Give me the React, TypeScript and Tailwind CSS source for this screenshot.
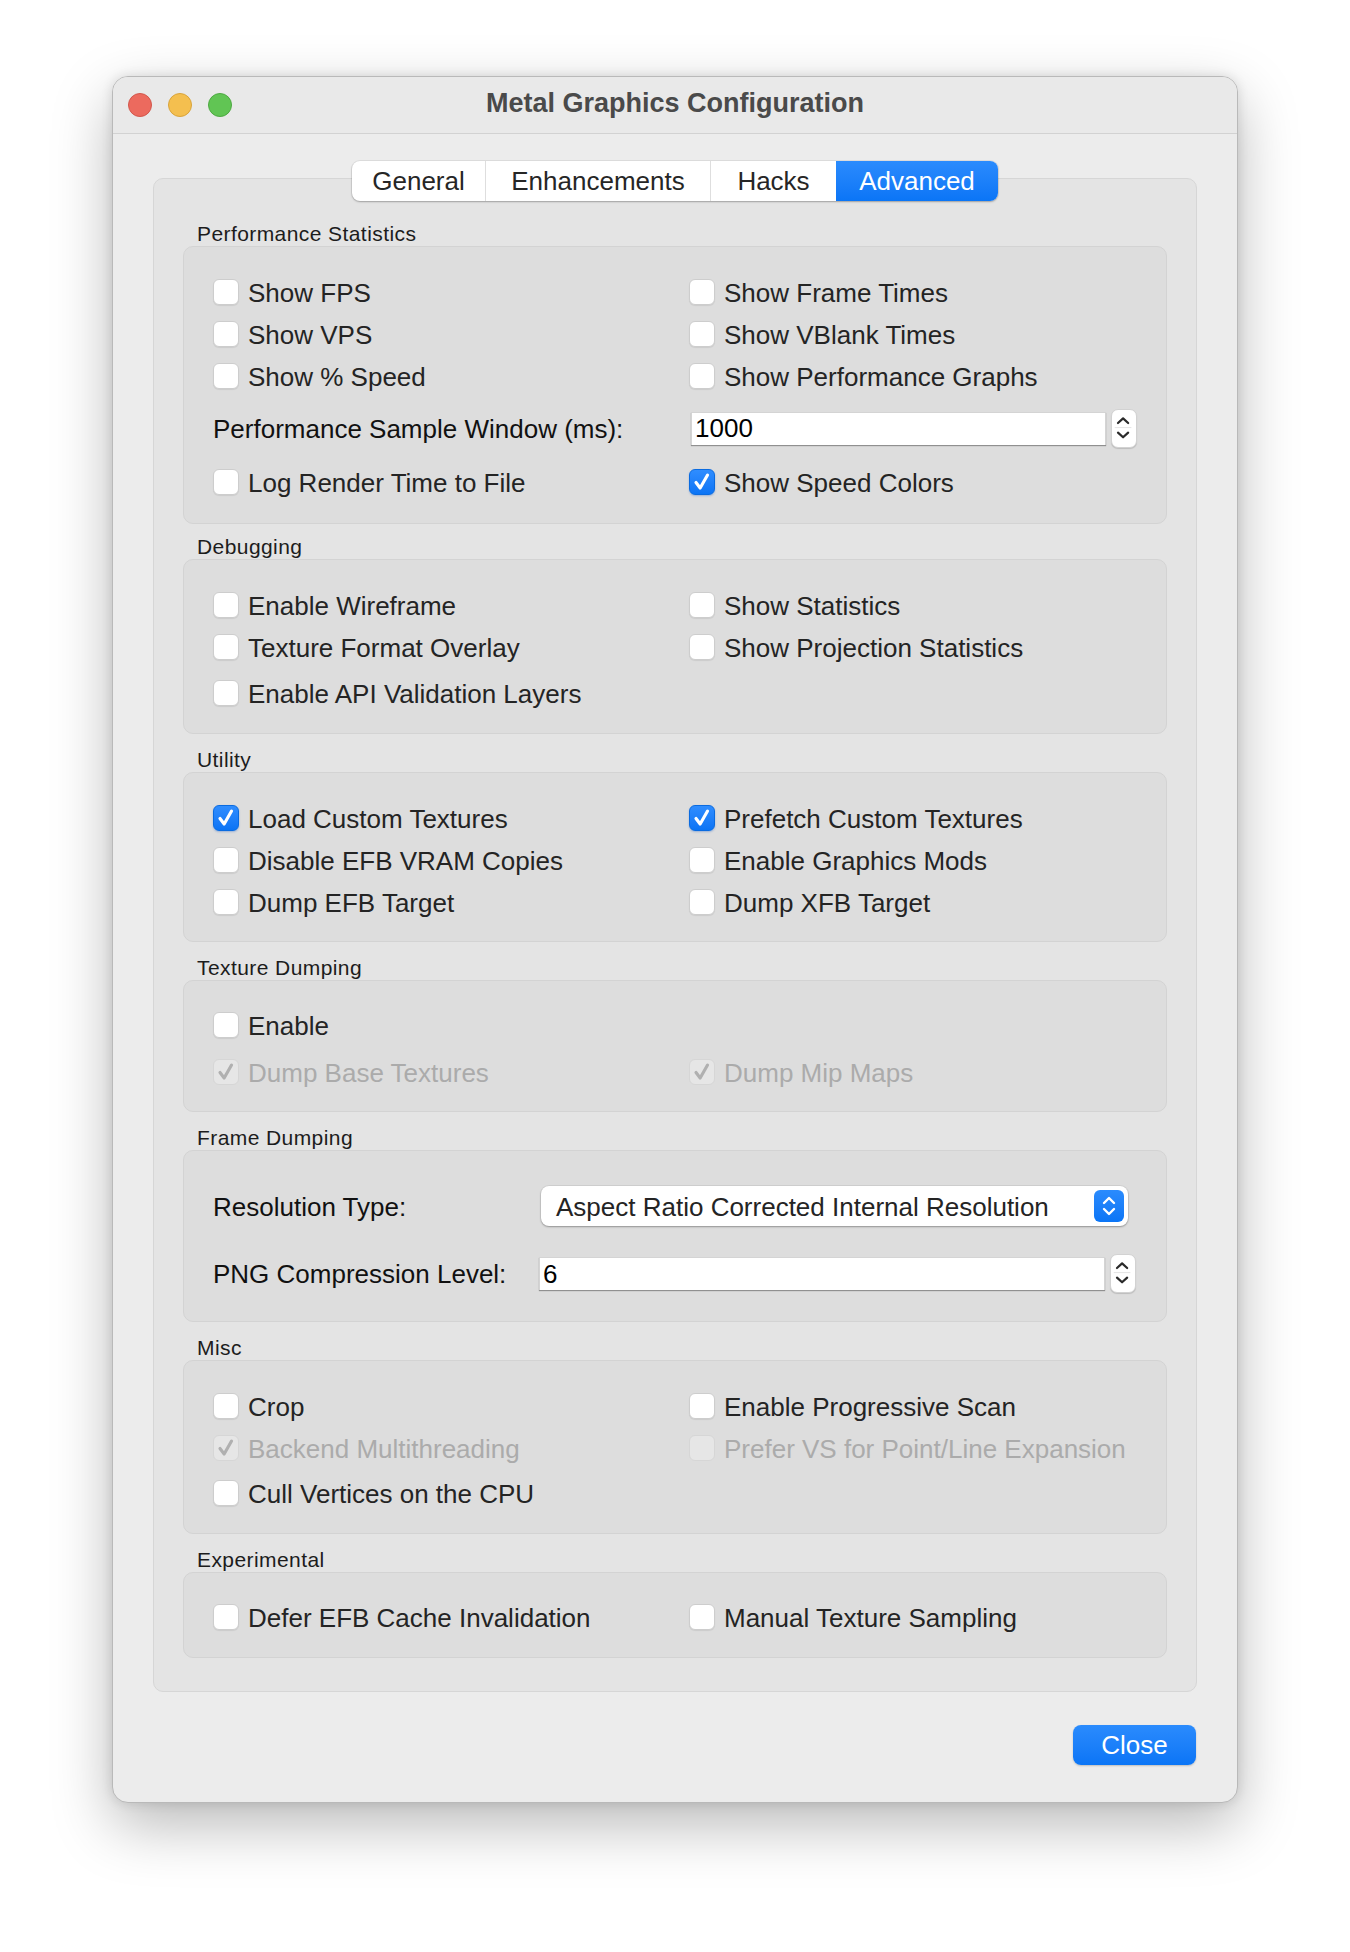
import React from 'react';

const FONT = { fontFamily: '"Liberation Sans", Arial, sans-serif' };

function CheckMark({ color }: { color: string }) {
  return (
    <svg viewBox="0 0 26 26" className="w-[26px] h-[26px]">
      <path d="M6.5 13.5 L11 19.5 L19 5.5" fill="none" stroke={color} strokeWidth="3.4" strokeLinecap="round" strokeLinejoin="round" />
    </svg>
  );
}

function Check({ label, checked = false, disabled = false }: { label: string; checked?: boolean; disabled?: boolean }) {
  let box = 'bg-white border border-[#cdcdcd] shadow-[0_1px_1px_rgba(0,0,0,0.08)]';
  if (checked && !disabled) box = 'bg-gradient-to-b from-[#2f8dff] to-[#0a74f5] border border-[#0a6be0] shadow-[0_1px_2px_rgba(0,80,200,0.3)]';
  if (disabled) box = 'bg-[#e6e6e6] border border-[#d6d6d6]';
  return (
    <div className="h-[42px] flex items-center">
      <div className={`w-[26px] h-[26px] rounded-[6px] flex items-center justify-center shrink-0 ${box}`}>
        {checked && <CheckMark color={disabled ? '#b0b0b0' : '#ffffff'} />}
      </div>
      <span className={`ml-[9px] pt-[2px] text-[26px] leading-none whitespace-nowrap ${disabled ? 'text-[#ababab]' : 'text-[#242424]'}`}>{label}</span>
    </div>
  );
}

function Stepper() {
  return (
    <div className="w-[26px] h-[39px] bg-white rounded-[7px] border border-[#d2d2d2] shadow-[0_1px_1px_rgba(0,0,0,0.15)] flex flex-col items-center justify-center shrink-0">
      <svg viewBox="0 0 26 39" className="w-[24px] h-[37px]">
        <path d="M6.5 13.5 L12 8.5 L17.5 13.5" fill="none" stroke="#2a2a2a" strokeWidth="2.4" strokeLinecap="round" strokeLinejoin="round" />
        <line x1="3" y1="18.5" x2="21" y2="18.5" stroke="#e2e2e2" strokeWidth="1" />
        <path d="M6.5 24 L12 29 L17.5 24" fill="none" stroke="#2a2a2a" strokeWidth="2.4" strokeLinecap="round" strokeLinejoin="round" />
      </svg>
    </div>
  );
}

function NumberField({ value, width }: { value: string; width: string }) {
  return (
    <div className="flex items-center gap-[5px]">
      <div className={`${width} h-[33px] bg-white border-t border-x border-[#d4d4d4] shadow-[0_1px_1px_rgba(0,0,0,0.35)] flex items-center pl-[3px] text-[26px] text-black`}>
        {value}
      </div>
      <Stepper />
    </div>
  );
}

function Section({ title, children, className = '', gap = 'mt-[12px]' }: { title: string; children: React.ReactNode; className?: string; gap?: string }) {
  return (
    <div className={gap}>
      <div className="h-[26px] pl-[14px] text-[21px] tracking-[0.02em] leading-[28px] text-[#1c1c1c]">{title}</div>
      <div className={`bg-[#dddddd] border border-[#d3d3d3] rounded-[10px] pl-[29px] pr-[29px] ${className}`}>{children}</div>
    </div>
  );
}

function Grid({ children }: { children: React.ReactNode }) {
  return <div className="grid grid-cols-[476px_1fr]">{children}</div>;
}

export default function App() {
  return (
    <div className="min-h-[1952px] bg-white pl-[112px] pt-[76px]" style={FONT}>
      <div className="w-[1126px] bg-[#ececec] rounded-[16px] border border-[#b9b9b9] shadow-[0_22px_60px_rgba(0,0,0,0.28),0_0_12px_rgba(0,0,0,0.12)] overflow-hidden">
        {/* title bar */}
        <div className="h-[57px] border-b border-[#d2d2d2] grid grid-cols-[1fr_auto_1fr] items-center bg-[#e9e9e9]">
          <div className="flex items-center gap-[16px] pl-[15px]">
            <div className="w-[24px] h-[24px] rounded-full bg-[#ec6a5e] border border-[#d2574c]" />
            <div className="w-[24px] h-[24px] rounded-full bg-[#f4bf4f] border border-[#d9a43b]" />
            <div className="w-[24px] h-[24px] rounded-full bg-[#61c554] border border-[#4ea942]" />
          </div>
          <div className="text-[27px] font-bold text-[#4a4a4a] pb-[4px]">Metal Graphics Configuration</div>
          <div />
        </div>

        <div className="px-[40px] pt-[27px]">
          {/* tabs */}
          <div className="flex justify-center relative z-10">
            <div className="flex h-[40px] rounded-[8px] bg-white shadow-[0_1px_2px_rgba(0,0,0,0.25),0_0_0_1px_rgba(0,0,0,0.06)] text-[26px] text-[#262626] overflow-hidden">
              <div className="w-[134px] flex items-center justify-center border-r border-[#dedede]">General</div>
              <div className="w-[225px] flex items-center justify-center border-r border-[#dedede]">Enhancements</div>
              <div className="w-[125px] flex items-center justify-center">Hacks</div>
              <div className="w-[162px] flex items-center justify-center text-white bg-gradient-to-b from-[#2a8bfd] to-[#0a75f6]">Advanced</div>
            </div>
          </div>

          {/* tab panel */}
          <div className="-mt-[23px] bg-[#e4e4e4] border border-[#d6d6d6] rounded-[10px] px-[29px] pt-[41px] pb-[33px]">
            <Section title="Performance Statistics" gap="" className="pt-[24px] pb-[20px]">
              <Grid>
                <Check label="Show FPS" />
                <Check label="Show Frame Times" />
                <Check label="Show VPS" />
                <Check label="Show VBlank Times" />
                <Check label="Show % Speed" />
                <Check label="Show Performance Graphs" />
                <div className="h-[62px] flex items-center pt-[2px] text-[26px] text-[#111]">Performance Sample Window (ms):</div>
                <div className="h-[62px] flex items-center pl-[2px]">
                  <NumberField value="1000" width="w-[415px]" />
                </div>
                <div className="mt-[2px]"><Check label="Log Render Time to File" /></div>
                <div className="mt-[2px]"><Check label="Show Speed Colors" checked /></div>
              </Grid>
            </Section>

            <Section title="Debugging" gap="mt-[9px]" className="pt-[24px] pb-[19px]">
              <Grid>
                <Check label="Enable Wireframe" />
                <Check label="Show Statistics" />
                <Check label="Texture Format Overlay" />
                <Check label="Show Projection Statistics" />
                <div className="mt-[4px]"><Check label="Enable API Validation Layers" /></div>
              </Grid>
            </Section>

            <Section title="Utility" className="pt-[24px] pb-[18px]">
              <Grid>
                <Check label="Load Custom Textures" checked />
                <Check label="Prefetch Custom Textures" checked />
                <Check label="Disable EFB VRAM Copies" />
                <Check label="Enable Graphics Mods" />
                <Check label="Dump EFB Target" />
                <Check label="Dump XFB Target" />
              </Grid>
            </Section>

            <Section title="Texture Dumping" className="pt-[23px] pb-[18px]">
              <Grid>
                <Check label="Enable" />
                <div />
                <div className="mt-[5px]"><Check label="Dump Base Textures" checked disabled /></div>
                <div className="mt-[5px]"><Check label="Dump Mip Maps" checked disabled /></div>
              </Grid>
            </Section>

            <Section title="Frame Dumping" className="pt-[35px] pb-[28px]">
              <div className="grid grid-cols-[328px_1fr] items-center">
                <div className="h-[40px] flex items-center pt-[2px] text-[26px] text-[#111]">Resolution Type:</div>
                <div className="w-[587px] h-[40px] bg-white rounded-[8px] shadow-[0_1px_2px_rgba(0,0,0,0.3),0_0_0_1px_rgba(0,0,0,0.05)] flex items-center justify-between pl-[15px] pr-[4px]">
                  <span className="text-[26px] pt-[2px] text-[#242424]">Aspect Ratio Corrected Internal Resolution</span>
                  <div className="w-[30px] h-[32px] rounded-[6px] bg-gradient-to-b from-[#2a8bfd] to-[#0a75f6] flex items-center justify-center">
                    <svg viewBox="0 0 30 32" className="w-[30px] h-[32px]">
                      <path d="M10 13 L15 8 L20 13" fill="none" stroke="#fff" strokeWidth="2.4" strokeLinecap="round" strokeLinejoin="round" />
                      <path d="M10 19 L15 24 L20 19" fill="none" stroke="#fff" strokeWidth="2.4" strokeLinecap="round" strokeLinejoin="round" />
                    </svg>
                  </div>
                </div>
                <div className="h-[39px] mt-[28px] flex items-center pt-[2px] text-[26px] text-[#111]">PNG Compression Level:</div>
                <div className="mt-[28px] -ml-[2px]">
                  <NumberField value="6" width="w-[566px]" />
                </div>
              </div>
            </Section>

            <Section title="Misc" className="pt-[24px] pb-[19px]">
              <Grid>
                <Check label="Crop" />
                <Check label="Enable Progressive Scan" />
                <Check label="Backend Multithreading" checked disabled />
                <Check label="Prefer VS for Point/Line Expansion" disabled />
                <div className="mt-[3px]"><Check label="Cull Vertices on the CPU" /></div>
              </Grid>
            </Section>

            <Section title="Experimental" className="pt-[23px] pb-[19px]">
              <Grid>
                <Check label="Defer EFB Cache Invalidation" />
                <Check label="Manual Texture Sampling" />
              </Grid>
            </Section>
          </div>

          <div className="flex justify-end pt-[33px] pb-[37px] pr-[1px]">
            <div className="w-[123px] h-[40px] rounded-[8px] bg-gradient-to-b from-[#2a8bfd] to-[#0a75f6] shadow-[0_1px_2px_rgba(0,0,0,0.2)] flex items-center justify-center text-white text-[26px]">
              Close
            </div>
          </div>
        </div>
      </div>
    </div>
  );
}
